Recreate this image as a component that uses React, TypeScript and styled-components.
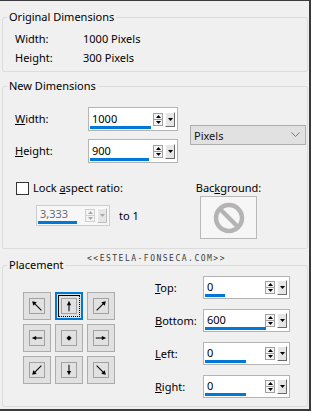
import React from "react";
import styled, { createGlobalStyle } from "styled-components";

const GlobalStyle = createGlobalStyle`
  html, body {
    margin: 0;
    padding: 0;
    background: #f0f0f0;
  }
  body {
    font-family: "Noto Sans", "DejaVu Sans", sans-serif;
    font-size: 11px;
    color: #000;
  }
`;

const Dialog = styled.div`
  position: relative;
  width: 311px;
  height: 411px;
  box-sizing: border-box;
  background: #f0f0f0;
  border-top: 1px solid #3a3a3a;
  border-right: 2px solid #3a3a3a;
  border-bottom: 2px solid #3a3a3a;
  padding: 0 1px 0 2px;
  display: flex;
  flex-direction: column;
`;

const Group = styled.fieldset<{ $top: number }>`
  margin: ${(p) => p.$top}px 0 0 0;
  padding: 0;
  border: 1px solid #dcdcdc;
  border-radius: 2px;
  min-width: 0;
`;

const Legend = styled.legend`
  margin-left: 4px;
  padding: 0 2px;
  line-height: 14px;
  font-size: 11px;
`;

const Key = styled.span`
  text-decoration: underline;
  text-underline-offset: 1px;
`;

/* ---------- Original dimensions ---------- */

const InfoList = styled.div`
  padding: 5px 0 4px 12px;
`;

const InfoRow = styled.div`
  display: flex;
  line-height: 19px;
`;

const InfoLabel = styled.span`
  width: 68px;
`;

/* ---------- New dimensions ---------- */

const DimensionsGrid = styled.div`
  display: grid;
  grid-template-columns: 73px 90px 1fr;
  grid-template-rows: 24px 24px;
  row-gap: 8px;
  align-items: center;
  padding: 14px 0 0 12px;
`;

const FieldLabel = styled.label`
  line-height: 14px;
`;

const Select = styled.div`
  grid-column: 3;
  grid-row: 1 / 3;
  align-self: center;
  margin-left: 12px;
  width: 116px;
  height: 20px;
  box-sizing: border-box;
  border: 1px solid #adadad;
  background: #e1e1e1;
  display: flex;
  align-items: center;
  justify-content: space-between;
  padding: 0 5px 0 3px;
  color: #111;
`;

const AspectSection = styled.div`
  display: flex;
  padding: 18px 0 9px 13px;
`;

const AspectColumn = styled.div`
  width: 184px;
  display: flex;
  flex-direction: column;
`;

const CheckRow = styled.label`
  display: flex;
  align-items: center;
  height: 14px;
  gap: 4px;
  line-height: 14px;
`;

const CheckBox = styled.span`
  width: 13px;
  height: 13px;
  box-sizing: border-box;
  border: 1px solid #333;
  background: #fff;
`;

const RatioRow = styled.div`
  display: flex;
  align-items: center;
  margin: 10px 0 0 20px;
  gap: 9px;
`;

const BackgroundColumn = styled.div`
  width: 57px;
  display: flex;
  flex-direction: column;
  align-items: center;
`;

const BackgroundLabel = styled.span`
  line-height: 14px;
  white-space: nowrap;
`;

const Swatch = styled.div`
  margin-top: 1px;
  width: 57px;
  height: 43px;
  box-sizing: border-box;
  border: 1px solid #b9b9b9;
  background: #f6f6f6;
  display: flex;
  align-items: center;
  justify-content: center;
`;

/* ---------- Spin box ---------- */

const SpinFrame = styled.div<{ $w: number; $h: number; $disabled?: boolean }>`
  width: ${(p) => p.$w}px;
  height: ${(p) => p.$h}px;
  box-sizing: border-box;
  border: 1px solid ${(p) => (p.$disabled ? "#cccccc" : "#b4b4b4")};
  background: ${(p) => (p.$disabled ? "#f7f7f7" : "#fff")};
  display: flex;
  align-items: center;
  padding-right: 2px;
`;

const SpinField = styled.div`
  flex: 1;
  align-self: stretch;
  display: flex;
  flex-direction: column;
  justify-content: flex-end;
  padding-bottom: 1px;
  min-width: 0;
`;

const SpinText = styled.span<{ $disabled?: boolean }>`
  line-height: 14px;
  padding-left: 3px;
  color: ${(p) => (p.$disabled ? "#6d6d6d" : "#000")};
`;

const SpinBar = styled.div`
  height: 3px;
  margin-left: 1px;
  background: #0078d7;
`;

const Steppers = styled.div`
  display: flex;
  flex-direction: column;
  width: 10px;
  margin-right: 2px;
`;

const Step = styled.div<{ $disabled?: boolean }>`
  height: 7px;
  box-sizing: border-box;
  border: 1px solid ${(p) => (p.$disabled ? "#cfcfcf" : "#a0a0a0")};
  background: #f4f4f4;
  display: flex;
  align-items: center;
  justify-content: center;
  & + & {
    border-top: none;
    height: 6px;
  }
`;

const DropButton = styled.div<{ $disabled?: boolean }>`
  width: 10px;
  height: 15px;
  box-sizing: border-box;
  background: #e6e6e6;
  border-top: 1px solid #fff;
  border-left: 1px solid #fff;
  border-right: 1px solid ${(p) => (p.$disabled ? "#bdbdbd" : "#6a6a6a")};
  border-bottom: 1px solid ${(p) => (p.$disabled ? "#bdbdbd" : "#6a6a6a")};
  display: flex;
  align-items: center;
  justify-content: center;
`;

const Tri = ({ up, color }: { up?: boolean; color: string }) => (
  <svg width="5" height="3" viewBox="0 0 5 3">
    <polygon points={up ? "2.5,0 5,3 0,3" : "0,0 5,0 2.5,3"} fill={color} />
  </svg>
);

interface SpinProps {
  w: number;
  h: number;
  value: string;
  bar: number;
  disabled?: boolean;
}

const SpinBox: React.FC<SpinProps> = ({ w, h, value, bar, disabled }) => {
  const ink = disabled ? "#a8a8a8" : "#000";
  return (
    <SpinFrame $w={w} $h={h} $disabled={disabled}>
      <SpinField>
        <SpinText $disabled={disabled}>{value}</SpinText>
        <SpinBar style={{ width: bar }} />
      </SpinField>
      <Steppers>
        <Step $disabled={disabled}>
          <Tri up color={ink} />
        </Step>
        <Step $disabled={disabled}>
          <Tri color={ink} />
        </Step>
      </Steppers>
      <DropButton $disabled={disabled}>
        <Tri color={ink} />
      </DropButton>
    </SpinFrame>
  );
};

/* ---------- Placement ---------- */

const PlacementBody = styled.div`
  display: flex;
  padding: 4px 0 8px 20px;
`;

const AnchorGrid = styled.div`
  margin-top: 16px;
  display: grid;
  grid-template-columns: repeat(3, 28px);
  grid-auto-rows: 28px;
  gap: 4px;
  align-self: flex-start;
`;

const AnchorButton = styled.div<{ $active?: boolean }>`
  box-sizing: border-box;
  border: ${(p) => (p.$active ? "2px solid #0078d7" : "1px solid #adadad")};
  background: #e1e1e1;
  display: flex;
  align-items: center;
  justify-content: center;
`;

const FocusRing = styled.div`
  width: 22px;
  height: 22px;
  box-sizing: border-box;
  border-top: 1px solid #000;
  border-left: 1px solid #000;
  border-right: 1px dotted #000;
  border-bottom: 1px dotted #000;
  display: flex;
  align-items: center;
  justify-content: center;
`;

const AnchorFace = styled.div`
  width: 16px;
  height: 16px;
  box-sizing: border-box;
  border: 1px solid #a2a2a2;
  display: flex;
  align-items: center;
  justify-content: center;
`;

const OffsetList = styled.div`
  margin-left: 40px;
  display: flex;
  flex-direction: column;
  gap: 10px;
`;

const OffsetRow = styled.div`
  display: flex;
  align-items: center;
`;

const OffsetLabel = styled.label`
  width: 48px;
  line-height: 14px;
`;

const Watermark = styled.div`
  position: absolute;
  top: 253px;
  left: 87px;
  font-family: "DejaVu Sans Mono", monospace;
  font-size: 8px;
  line-height: 9px;
  letter-spacing: 1.5px;
  color: #3c3c3c;
`;

type Dir = "nw" | "n" | "ne" | "w" | "c" | "e" | "sw" | "s" | "se";

const rotation: Record<Dir, number> = {
  n: 0, e: 90, s: 180, w: 270, ne: 0, se: 90, sw: 180, nw: 270, c: 0,
};

const Arrow = ({ dir }: { dir: Dir }) => {
  if (dir === "c") {
    return (
      <svg width="14" height="14" viewBox="0 0 16 16">
        <polygon points="8,5 11,8 8,11 5,8" fill="#000" />
      </svg>
    );
  }
  const diagonal = dir.length === 2;
  return (
    <svg width="14" height="14" viewBox="0 0 16 16">
      <g transform={`rotate(${rotation[dir]} 8 8)`}>
        {diagonal ? (
          <>
            <line x1="3" y1="13" x2="11" y2="5" stroke="#000" strokeWidth="1.2" />
            <polygon points="13.5,2.5 8.3,3.8 12.2,7.7" fill="#000" />
          </>
        ) : (
          <>
            <line x1="8" y1="14" x2="8" y2="5" stroke="#000" strokeWidth="1.2" />
            <polygon points="8,2 5.6,7 10.4,7" fill="#000" />
          </>
        )}
      </g>
    </svg>
  );
};

const anchors: Dir[] = ["nw", "n", "ne", "w", "c", "e", "sw", "s", "se"];

const offsets = [
  { key: "T", rest: "op:", value: "0", bar: 20 },
  { key: "B", rest: "ottom:", value: "600", bar: 61 },
  { key: "L", rest: "eft:", value: "0", bar: 41 },
  { key: "R", rest: "ight:", value: "0", bar: 41 },
];

const NoSign = () => (
  <svg width="34" height="34" viewBox="0 0 34 34">
    <circle cx="17" cy="17" r="13" fill="none" stroke="#b4b4b4" strokeWidth="4.5" />
    <line x1="8" y1="8" x2="26" y2="26" stroke="#b4b4b4" strokeWidth="4.5" />
  </svg>
);

const Chevron = () => (
  <svg width="9" height="6" viewBox="0 0 9 6">
    <polyline points="0.5,0.5 4.5,4.5 8.5,0.5" fill="none" stroke="#777" strokeWidth="1" />
  </svg>
);

export default function App() {
  return (
    <>
      <GlobalStyle />
      <Dialog>
        <Group $top={9}>
          <Legend>Original Dimensions</Legend>
          <InfoList>
            <InfoRow>
              <InfoLabel>Width:</InfoLabel>
              <span>1000 Pixels</span>
            </InfoRow>
            <InfoRow>
              <InfoLabel>Height:</InfoLabel>
              <span>300 Pixels</span>
            </InfoRow>
          </InfoList>
        </Group>

        <Group $top={7}>
          <Legend>New Dimensions</Legend>
          <DimensionsGrid>
            <FieldLabel>
              <Key>W</Key>idth:
            </FieldLabel>
            <SpinBox w={90} h={24} value="1000" bar={61} />
            <Select>
              <span>Pixels</span>
              <Chevron />
            </Select>
            <FieldLabel>
              <Key>H</Key>eight:
            </FieldLabel>
            <SpinBox w={90} h={24} value="900" bar={59} />
          </DimensionsGrid>
          <AspectSection>
            <AspectColumn>
              <CheckRow>
                <CheckBox />
                <span>
                  Lock <Key>a</Key>spect ratio:
                </span>
              </CheckRow>
              <RatioRow>
                <SpinBox w={74} h={21} value="3,333" bar={39} disabled />
                <span>to 1</span>
              </RatioRow>
            </AspectColumn>
            <BackgroundColumn>
              <BackgroundLabel>
                Bac<Key>k</Key>ground:
              </BackgroundLabel>
              <Swatch>
                <NoSign />
              </Swatch>
            </BackgroundColumn>
          </AspectSection>
        </Group>

        <Group $top={9}>
          <Legend>Placement</Legend>
          <PlacementBody>
            <AnchorGrid>
              {anchors.map((d) =>
                d === "n" ? (
                  <AnchorButton key={d} $active>
                    <FocusRing>
                      <AnchorFace>
                        <Arrow dir={d} />
                      </AnchorFace>
                    </FocusRing>
                  </AnchorButton>
                ) : (
                  <AnchorButton key={d}>
                    <AnchorFace>
                      <Arrow dir={d} />
                    </AnchorFace>
                  </AnchorButton>
                )
              )}
            </AnchorGrid>
            <OffsetList>
              {offsets.map((o) => (
                <OffsetRow key={o.key}>
                  <OffsetLabel>
                    <Key>{o.key}</Key>
                    {o.rest}
                  </OffsetLabel>
                  <SpinBox w={87} h={23} value={o.value} bar={o.bar} />
                </OffsetRow>
              ))}
            </OffsetList>
          </PlacementBody>
        </Group>

        <Watermark>{"<<ESTELA-FONSECA.COM>>"}</Watermark>
      </Dialog>
    </>
  );
}
